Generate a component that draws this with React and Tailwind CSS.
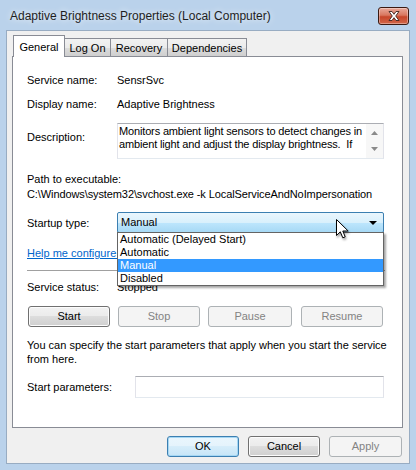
import { useMemo } from 'react'

const btn =
  'flex h-[21px] items-center justify-center rounded-[3px] border border-[#707070] bg-[linear-gradient(#f2f2f2_0%,#ebebeb_50%,#dddddd_50%,#cfcfcf_100%)] text-black shadow-[inset_0_0_0_1px_#fcfcfc]'
const btnOff =
  'flex h-[21px] items-center justify-center rounded-[3px] border border-[#adb2b5] bg-[#f4f4f4] text-[#838383]'

function CloseButton() {
  return (
    <div className="flex h-[18px] w-[31px] items-center justify-center rounded-[3px] border border-[#3b1a12] bg-[linear-gradient(#e9a99a_0%,#d9775f_45%,#c7462a_55%,#d2674a_100%)] shadow-[inset_0_0_0_1px_rgba(255,255,255,0.35)]">
      <svg width="14" height="12" viewBox="0 0 14 12">
        <path
          d="M2 1.5h3L7 4.3 9 1.5h3L8.7 6 12 10.5H9L7 7.7 5 10.5H2L5.3 6z"
          fill="#ffffff"
          stroke="#40251f"
          strokeWidth="0.9"
          strokeLinejoin="round"
        />
      </svg>
    </div>
  )
}

function Cursor() {
  return (
    <svg
      className="absolute left-[219px] top-[7px] z-30 drop-shadow-[1px_2px_1px_rgba(0,0,0,0.35)]"
      width="13"
      height="21"
      viewBox="0 0 13 21"
    >
      <path
        d="M0.5 0.5V16.5L4.3 12.8L6.8 18.8L9.2 17.8L6.8 12H12.2Z"
        fill="#ffffff"
        stroke="#000000"
        strokeWidth="1"
        strokeLinejoin="miter"
      />
    </svg>
  )
}

function Tab({ label, width, active }) {
  if (active) {
    return (
      <div
        className={`relative z-10 mb-[-1px] flex h-[22px] items-start justify-center border border-b-0 border-[#898c95] bg-white pt-[3px] ${width}`}
      >
        {label}
      </div>
    )
  }
  return (
    <div
      className={`ml-[-1px] flex h-[18px] items-center justify-center border border-b-0 border-[#898c95] bg-[linear-gradient(#f2f2f2_0%,#ebebeb_50%,#dddddd_50%,#cfcfcf_100%)] pt-[1px] ${width}`}
    >
      {label}
    </div>
  )
}

export default function App() {
  const options = useMemo(
    () => ['Automatic (Delayed Start)', 'Automatic', 'Manual', 'Disabled'],
    []
  )

  return (
    <div className="flex h-[470px] w-[416px] flex-col bg-[#bad2eb] font-['Liberation_Sans',Arial,sans-serif] text-[11px] text-black">
      {/* title bar */}
      <div className="flex h-[30px] shrink-0 items-center pl-[10px] pr-[7px]">
        <span className="pt-[1px] text-[12px] text-[#1e1e1e] [text-shadow:0_0_6px_#ffffff]">
          Adaptive Brightness Properties (Local Computer)
        </span>
        <div className="ml-auto mt-[2px]">
          <CloseButton />
        </div>
      </div>

      {/* client area */}
      <div className="mx-[6px] flex h-[434px] flex-col border border-[#98acc2] bg-[#f0f0f0] pl-[5px] pr-[6px] pt-[4px]">
        <div className="flex items-end pl-[1px]">
          <Tab label="General" width="w-[52px]" active />
          <Tab label="Log On" width="w-[47px]" />
          <Tab label="Recovery" width="w-[58px]" />
          <Tab label="Dependencies" width="w-[80px]" />
        </div>

        <div className="flex h-[372px] flex-col border border-[#898c95] bg-white pl-[14px] pt-[17px]">
          <div className="flex h-[13px] items-center">
            <span className="w-[90px]">Service name:</span>
            <span>SensrSvc</span>
          </div>
          <div className="mt-[11px] flex h-[13px] items-center">
            <span className="w-[90px]">Display name:</span>
            <span>Adaptive Brightness</span>
          </div>
          <div className="mt-[12px] flex">
            <span className="w-[90px] pt-[6px]">Description:</span>
            <div className="flex h-[36px] w-[267px] border border-[#abadb3] border-x-[#e2e3ea] border-b-[#e3e9ef]">
              <div className="flex-1 whitespace-nowrap pl-[1px] pt-[1px] leading-[13px] tracking-[-0.15px]">
                <div>Monitors ambient light sensors to detect changes in</div>
                <div>ambient light and adjust the display brightness.&nbsp; If</div>
              </div>
              <div className="flex w-[17px] flex-col items-center justify-between bg-[#f7f7f7] py-[7px]">
                <svg width="7" height="4" viewBox="0 0 7 4">
                  <path d="M0 4L3.5 0L7 4Z" fill="#8a8a8a" />
                </svg>
                <svg width="7" height="4" viewBox="0 0 7 4">
                  <path d="M0 0L3.5 4L7 0Z" fill="#8a8a8a" />
                </svg>
              </div>
            </div>
          </div>
          <div className="mt-[14px] h-[13px] leading-[13px]">Path to executable:</div>
          <div className="mt-[2px] h-[13px] whitespace-nowrap leading-[13px] tracking-[-0.1px]">
            C:\Windows\system32\svchost.exe -k LocalServiceAndNoImpersonation
          </div>

          <div className="mt-[11px] flex items-center">
            <span className="w-[90px] pt-[1px]">Startup type:</span>
            <div className="relative">
              <div className="flex h-[21px] w-[267px] items-center rounded-[2px] border border-[#3c7fb1] bg-[linear-gradient(#eaf6fd_0%,#d9f0fc_50%,#bee6fd_50%,#a7d9f5_100%)] pl-[3px] pr-[6px]">
                <span>Manual</span>
                <svg className="ml-auto" width="8" height="4" viewBox="0 0 8 4">
                  <path d="M0 0H8L4 4Z" fill="#000000" />
                </svg>
              </div>
              <div className="absolute left-0 top-[20px] z-20 w-[267px] border border-[#646464] bg-white shadow-[2px_2px_2px_rgba(0,0,0,0.35)]">
                {options.map((opt) => (
                  <div
                    key={opt}
                    className={
                      opt === 'Manual'
                        ? 'h-[13px] bg-[#3399ff] pl-[2px] leading-[13px] text-white'
                        : 'h-[13px] pl-[2px] leading-[13px]'
                    }
                  >
                    {opt}
                  </div>
                ))}
              </div>
              <Cursor />
            </div>
          </div>

          <div className="mt-[14px] h-[13px] leading-[13px]">
            <span className="text-[#0066cc] underline">Help me configure service startup options.</span>
          </div>
          <div className="mr-[17px] mt-[10px] h-[2px] border-t border-[#a0a0a0] border-b-white" />

          <div className="mt-[9px] flex h-[13px] items-center">
            <span className="w-[90px]">Service status:</span>
            <span>Stopped</span>
          </div>

          <div className="ml-[1px] mt-[12px] flex">
            <div className={`${btn} w-[82px]`}>Start</div>
            <div className={`${btnOff} ml-[8px] w-[82px]`}>Stop</div>
            <div className={`${btnOff} ml-[8px] w-[84px]`}>Pause</div>
            <div className={`${btnOff} ml-[9px] w-[82px]`}>Resume</div>
          </div>

          <div className="mt-[11px] w-[360px] leading-[14px]">
            You can specify the start parameters that apply when you start the service from here.
          </div>

          <div className="mt-[10px] flex items-center">
            <span className="w-[108px]">Start parameters:</span>
            <div className="h-[22px] w-[249px] border border-[#abadb3] border-x-[#e2e3ea] border-b-[#e3e9ef] bg-white" />
          </div>
        </div>

        <div className="mt-[8px] flex justify-end gap-[9px] pr-[1px]">
          <div className="flex h-[21px] w-[72px] items-center justify-center rounded-[3px] border border-[#3c7fb1] bg-[linear-gradient(#eaf6fd_0%,#e4f3fc_50%,#d6edfa_50%,#c6e5f7_100%)] shadow-[inset_0_0_0_1px_#a5d7f4]">
            OK
          </div>
          <div className={`${btn} w-[72px]`}>Cancel</div>
          <div className={`${btnOff} w-[73px]`}>Apply</div>
        </div>
      </div>
    </div>
  )
}
